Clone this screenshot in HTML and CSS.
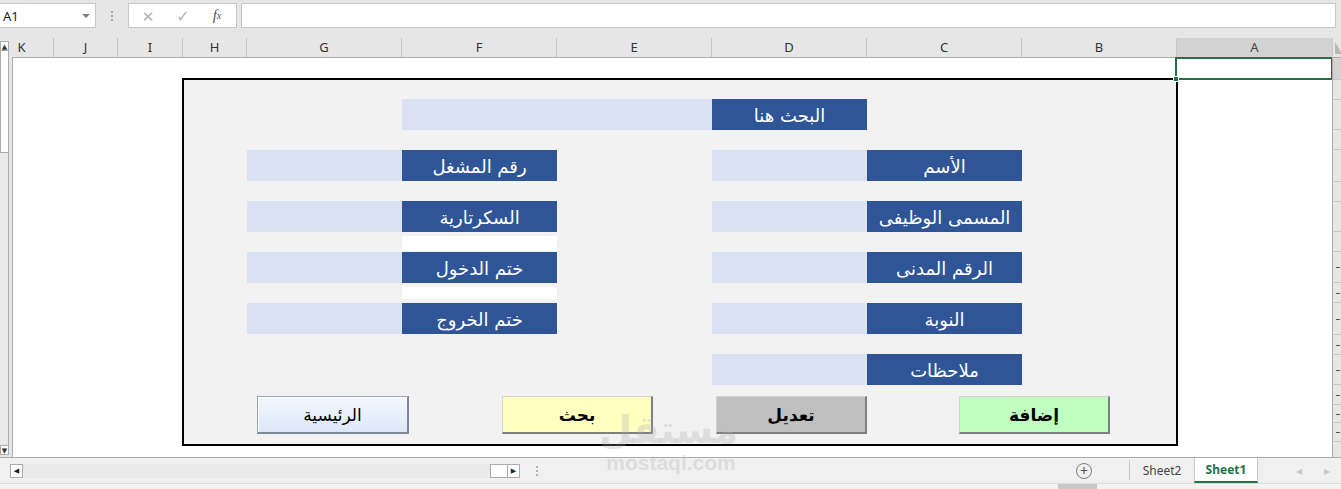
FILE: index.html
```html
<!DOCTYPE html>
<html lang="ar">
<head>
<meta charset="utf-8">
<title>Sheet1</title>
<link rel="stylesheet" href="styles.css">
</head>
<body>
<div class="app">
  <div class="fbar">
    <div class="namebox"><span class="nb-text">A1</span><span class="caret"></span></div>
    <div class="vdots"><i></i><i></i><i></i></div>
    <div class="fxbox">
      <span class="fx-btn fx-x">✕</span>
      <span class="fx-btn fx-ok">✓</span>
      <span class="fx-btn fx-f">f<sub>x</sub></span>
    </div>
    <div class="finput"></div>
  </div>

  <div class="sheet">
    <div class="vscroll">
      <div class="vs-bar">
        <div class="vs-arrow">▲</div>
        <div class="vs-thumb"></div>
        <div class="vs-track"></div>
        <div class="vs-arrow">▼</div>
      </div>
    </div>

    <div class="main">
      <div class="colhead">
        <div class="ch ch-k">K</div>
        <div class="ch ch-j">J</div>
        <div class="ch ch-i">I</div>
        <div class="ch ch-h">H</div>
        <div class="ch ch-w">G</div>
        <div class="ch ch-w">F</div>
        <div class="ch ch-w">E</div>
        <div class="ch ch-w">D</div>
        <div class="ch ch-w">C</div>
        <div class="ch ch-w">B</div>
        <div class="ch ch-w ch-sel">A</div>
      </div>
      <div class="grid">
        <div class="form">
          <div class="fields">
            <div class="inp search-inp"></div>
            <div class="lbl search-lbl">البحث هنا</div>

            <div class="inp l-inp r4"></div>
            <div class="lbl l-lbl r4">رقم المشغل</div>
            <div class="inp r-inp r4"></div>
            <div class="lbl r-lbl r4">الأسم</div>

            <div class="inp l-inp r6"></div>
            <div class="lbl l-lbl r6">السكرتارية</div>
            <div class="inp r-inp r6"></div>
            <div class="lbl r-lbl r6">المسمى الوظيفى</div>

            <div class="white w7"></div>

            <div class="inp l-inp r8"></div>
            <div class="lbl l-lbl r8">ختم الدخول</div>
            <div class="inp r-inp r8"></div>
            <div class="lbl r-lbl r8">الرقم المدنى</div>

            <div class="white w9"></div>

            <div class="inp l-inp r10"></div>
            <div class="lbl l-lbl r10">ختم الخروج</div>
            <div class="inp r-inp r10"></div>
            <div class="lbl r-lbl r10">النوبة</div>

            <div class="inp r-inp r12"></div>
            <div class="lbl r-lbl r12">ملاحظات</div>
          </div>
          <div class="buttons">
            <div class="btn btn-home">الرئيسية</div>
            <div class="btn btn-search">بحث</div>
            <div class="btn btn-edit">تعديل</div>
            <div class="btn btn-add">إضافة</div>
          </div>
        </div>
        <div class="active-cell"><span class="handle"></span></div>
      </div>
    </div>

    <div class="rowhead">
      <div class="rh-corner"></div>
      <div class="rh rh-sel h22"></div>
      <div class="rh h20"></div>
      <div class="rh h30"></div>
      <div class="rh h20"></div>
      <div class="rh h32"></div>
      <div class="rh h20"></div>
      <div class="rh h30"></div>
      <div class="rh h20"></div>
      <div class="rh h31 mark"></div>
      <div class="rh h20 mark"></div>
      <div class="rh h32 mark"></div>
      <div class="rh h20 mark"></div>
      <div class="rh h30 mark"></div>
      <div class="rh h20 mark"></div>
      <div class="rh h18 mark"></div>
      <div class="rh h19 mark"></div>
      <div class="rh rh-last"></div>
    </div>
  </div>

  <div class="tabbar">
    <div class="hs-arrow hs-left">◀</div>
    <div class="hs-track"></div>
    <div class="hs-thumb"></div>
    <div class="hs-arrow hs-right">▶</div>
    <div class="hdots"><i></i><i></i><i></i></div>
    <div class="tab-spacer"></div>
    <div class="addsheet">+</div>
    <div class="tab-sep"></div>
    <div class="tab tab-2">Sheet2</div>
    <div class="tab tab-1">Sheet1</div>
    <div class="tab-nav">◀</div>
    <div class="tab-nav">▶</div>
  </div>
  <div class="status"><span class="status-patch"></span></div>

  <div class="watermark">
    <div class="wm-ar">مستقل</div>
    <div class="wm-en">mostaql.com</div>
  </div>
</div>
</body>
</html>
```

FILE: styles.css
```css
* { box-sizing: border-box; }

body {
  margin: 0;
  font-family: "Noto Sans", "Open Sans", "DejaVu Sans", sans-serif;
  background: #e6e6e6;
}

.app {
  width: 1341px;
  height: 489px;
  overflow: hidden;
  position: relative;
  background: #e6e6e6;
}

/* ---------- formula bar ---------- */
.fbar {
  height: 38px;
  display: flex;
  align-items: flex-start;
  padding-top: 3px;
}

.namebox {
  width: 96px;
  height: 25px;
  background: #fff;
  border: 1px solid #c6c6c6;
  border-left: none;
  display: flex;
  align-items: center;
  justify-content: space-between;
  padding: 0 5px 0 3px;
  font-size: 13px;
  color: #222;
}

.caret {
  width: 0;
  height: 0;
  border-left: 4px solid transparent;
  border-right: 4px solid transparent;
  border-top: 4px solid #808080;
}

.vdots {
  width: 32px;
  height: 25px;
  display: flex;
  flex-direction: column;
  align-items: center;
  justify-content: center;
  gap: 2px;
}

.vdots i {
  display: block;
  width: 2px;
  height: 2px;
  background: #a8a8a8;
}

.fxbox {
  width: 109px;
  height: 25px;
  background: #fff;
  border: 1px solid #c6c6c6;
  display: flex;
  align-items: center;
}

.fx-btn {
  display: flex;
  justify-content: center;
  align-items: center;
  height: 23px;
  color: #b4b4b4;
  font-size: 15px;
}

.fx-x { width: 38px; }
.fx-ok { width: 32px; font-size: 16px; }
.fx-f {
  width: 36px;
  color: #555;
  font-family: "Liberation Serif", serif;
  font-style: italic;
  font-size: 15px;
}
.fx-f sub { font-size: 10px; vertical-align: -1px; }

.finput {
  margin-left: 4px;
  width: 1095px;
  height: 25px;
  background: #fff;
  border: 1px solid #c6c6c6;
}

/* ---------- sheet ---------- */
.sheet {
  display: flex;
  height: 419px;
}

.vscroll {
  width: 12px;
  padding-top: 3px;
  padding-bottom: 2px;
  display: flex;
}

.vs-bar {
  width: 9px;
  display: flex;
  flex-direction: column;
  border-right: 1px solid #ababab;
}

.vs-arrow {
  height: 10px;
  font-size: 7px;
  line-height: 10px;
  text-align: center;
  color: #333;
  background: #fff;
  border: 1px solid #ababab;
  border-right: none;
}

.vs-thumb {
  height: 102px;
  background: #fff;
  border: 1px solid #ababab;
  border-top: none;
  border-right: none;
}

.vs-track {
  flex: 1;
  background: #e9e9e9;
}

.main {
  width: 1320px;
  display: flex;
  flex-direction: column;
}

.colhead {
  height: 20px;
  display: flex;
  background: #e6e6e6;
  border-bottom: 1px solid #ababab;
}

.ch {
  height: 19px;
  border-right: 1px solid #c6c6c6;
  font-size: 13px;
  line-height: 19px;
  color: #333;
  text-align: center;
}

.ch-k { width: 42px; padding-right: 22px; }
.ch-j { width: 64px; }
.ch-i { width: 65px; }
.ch-h { width: 64px; }
.ch-w { width: 155px; }
.ch-sel {
  background: #d2d2d2;
  color: #444;
  border-right: none;
}

.grid {
  height: 399px;
  background: #fff;
  position: relative;
  border-left: 1px solid #ababab;
  padding-top: 20px;
  padding-left: 169px;
}

/* ---------- form ---------- */
.form {
  width: 996px;
  height: 368px;
  border: 2px solid #000;
  background: #f2f2f2;
  display: flex;
  flex-direction: column;
}

.fields {
  display: grid;
  grid-template-columns: 63px 155px 155px 155px 155px 155px 154px;
  grid-template-rows: 19px 31px 20px 31px 20px 31px 20px 31px 20px 31px 20px 31px;
}

.inp { background: #d9e1f2; }

.lbl {
  background: #2f5597;
  color: #fff;
  font-family: "DejaVu Sans", sans-serif;
  font-size: 18px;
  direction: rtl;
  display: flex;
  align-items: center;
  justify-content: center;
  padding-top: 2px;
}

.search-inp { grid-column: 3 / 5; grid-row: 2; }
.search-lbl { grid-column: 5; grid-row: 2; }

.l-inp { grid-column: 2; }
.l-lbl { grid-column: 3; }
.r-inp { grid-column: 5; }
.r-lbl { grid-column: 6; }

.r4 { grid-row: 4; }
.r6 { grid-row: 6; }
.r8 { grid-row: 8; }
.r10 { grid-row: 10; }
.r12 { grid-row: 12; }

.white { grid-column: 3; background: #fff; }
.w7 { grid-row: 7; margin: 4px 0 1px; }
.w9 { grid-row: 9; margin: 4px 0 4px; }

.buttons {
  display: flex;
  margin-top: 11px;
  padding-left: 73px;
}

.btn {
  width: 151px;
  height: 38px;
  display: flex;
  align-items: center;
  justify-content: center;
  font-family: "DejaVu Sans", sans-serif;
  font-weight: bold;
  font-size: 17px;
  color: #000;
  direction: rtl;
  border-top: 1px solid #d4d4d4;
  border-left: 1px solid #d4d4d4;
  border-right: 2px solid #7f7f7f;
  border-bottom: 2px solid #7f7f7f;
}

.btn-home {
  width: 152px;
  font-weight: normal;
  background: linear-gradient(#f4f8ff, #dce8f8);
  border-top-color: #9aa6b8;
  border-left-color: #9aa6b8;
  border-right-color: #7d8796;
  border-bottom-color: #7d8796;
  box-shadow: inset 1px 1px 0 #ffffff;
}

.btn-search { margin-left: 93px; background: #ffffc0; }
.btn-edit { margin-left: 63px; background: #c0c0c0; }
.btn-add { margin-left: 92px; background: #c0ffc0; }

.active-cell {
  position: absolute;
  left: 1162px;
  top: -1px;
  width: 158px;
  height: 23px;
  border: 2px solid #217346;
}

.handle {
  position: absolute;
  left: -4px;
  bottom: -4px;
  width: 6px;
  height: 6px;
  background: #217346;
  border: 1px solid #fff;
}

/* ---------- row headers ---------- */
.rowhead {
  width: 9px;
  display: flex;
  flex-direction: column;
  background: #e6e6e6;
}

.rh-corner {
  height: 20px;
  border-bottom: 1px solid #ababab;
  border-left: 1px solid #c6c6c6;
  position: relative;
  background: #e6e6e6;
}

.rh-corner::after {
  content: "";
  position: absolute;
  left: 2px;
  bottom: 3px;
  width: 0;
  height: 0;
  border-top: 12px solid transparent;
  border-left: 7px solid #b8b8b8;
}

.rh {
  border-left: 1px solid #ababab;
  border-bottom: 1px solid #c6c6c6;
  position: relative;
}

.rh-sel { background: #d2d2d2; }
.rh-last { flex: 1; border-bottom: none; }

.mark::after {
  content: "";
  position: absolute;
  right: 1px;
  top: 50%;
  width: 4px;
  height: 1px;
  background: #555;
}

.h18 { height: 18px; }
.h19 { height: 19px; }
.h20 { height: 20px; }
.h22 { height: 22px; }
.h30 { height: 30px; }
.h31 { height: 31px; }
.h32 { height: 32px; }

/* ---------- tab bar ---------- */
.tabbar {
  height: 26px;
  background: #f0f0f0;
  border-top: 1px solid #ababab;
  display: flex;
  align-items: center;
  padding-left: 10px;
}

.hs-arrow {
  width: 13px;
  height: 14px;
  background: #fff;
  border: 1px solid #ababab;
  font-size: 7px;
  line-height: 12px;
  text-align: center;
  color: #222;
}

.hs-track {
  width: 467px;
  height: 14px;
  background: #e9e9e9;
}

.hs-thumb {
  width: 17px;
  height: 14px;
  background: #fff;
  border: 1px solid #ababab;
  border-right: none;
}

.hdots {
  margin-left: 16px;
  display: flex;
  flex-direction: column;
  gap: 2px;
}

.hdots i {
  display: block;
  width: 2px;
  height: 2px;
  background: #b4b4b4;
}

.tab-spacer { flex: 1; }

.addsheet {
  width: 16px;
  height: 16px;
  border: 1px solid #7a7a7a;
  border-radius: 50%;
  font-size: 14px;
  line-height: 13px;
  text-align: center;
  color: #555;
  margin-right: 37px;
}

.tab-sep {
  width: 1px;
  height: 19px;
  background: #c6c6c6;
}

.tab {
  height: 25px;
  display: flex;
  align-items: center;
  justify-content: center;
  font-size: 12px;
  color: #444;
}

.tab-2 { width: 64px; }

.tab-1 {
  width: 64px;
  background: #fff;
  color: #217346;
  font-weight: bold;
  border-bottom: 2px solid #217346;
  border-left: 1px solid #c6c6c6;
  border-right: 1px solid #c6c6c6;
  margin-top: -1px;
}

.tab-nav {
  width: 28px;
  font-size: 8px;
  color: #c8c8c8;
  text-align: center;
}

.tab-1 + .tab-nav { margin-left: 27px; }

.status {
  height: 6px;
  background: #f3f3f3;
  border-top: 1px solid #dcdcdc;
  position: relative;
}

.status-patch {
  position: absolute;
  left: 1058px;
  top: 0;
  width: 39px;
  height: 6px;
  background: #c8c8c8;
}

/* ---------- watermark ---------- */
.watermark {
  position: absolute;
  left: 604px;
  top: 408px;
  width: 134px;
  text-align: center;
  color: rgba(170, 170, 170, 0.3);
  pointer-events: none;
}

.wm-ar {
  font-family: "DejaVu Sans", sans-serif;
  font-weight: bold;
  font-size: 38px;
  line-height: 44px;
  direction: rtl;
}

.wm-en {
  font-family: "Liberation Sans", sans-serif;
  font-weight: bold;
  font-size: 21px;
  line-height: 22px;
  margin-top: 0;
}
```
